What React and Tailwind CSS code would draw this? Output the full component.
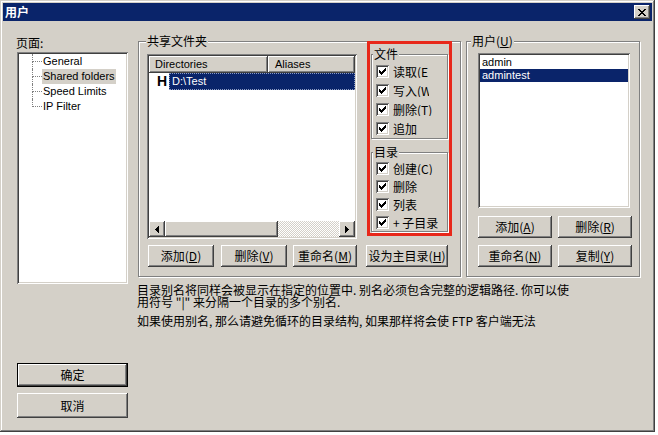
import React from "react";

const raised =
  "bg-[#d4d0c8] shadow-[inset_-1px_-1px_#404040,inset_1px_1px_#ffffff,inset_-2px_-2px_#808080,inset_2px_2px_#d4d0c8]";
const sunken =
  "bg-white shadow-[inset_1px_1px_#808080,inset_-1px_-1px_#ffffff,inset_2px_2px_#404040,inset_-2px_-2px_#d4d0c8]";
const cjk = "font-['Noto_Sans_CJK_SC','Noto_Sans_CJK_JP',sans-serif]";
const latin = "font-['Liberation_Sans','Noto_Sans_CJK_SC',sans-serif]";

function U({ c }) {
  return <span className="underline underline-offset-[1px]">{c}</span>;
}

function Btn({ children, className = "" }) {
  return (
    <div
      className={`${raised} ${cjk} flex items-center justify-center text-[12px] leading-none text-black ${className}`}
    >
      {children}
    </div>
  );
}

function Group({ label, labelPos, className = "", children }) {
  return (
    <div
      className={`relative border border-[#808080] shadow-[inset_1px_1px_#ffffff,1px_1px_#ffffff] ${className}`}
    >
      <span
        className={`absolute ${labelPos} top-[-7px] bg-[#d4d0c8] px-[1px] leading-[12px] h-[12px] whitespace-nowrap ${cjk} text-[12px]`}
      >
        {label}
      </span>
      {children}
    </div>
  );
}

function CheckMark() {
  const rects = [
    [6, 0, 1],
    [5, 1, 2],
    [0, 2, 1],
    [4, 2, 3],
    [0, 3, 2],
    [3, 3, 3],
    [0, 4, 5],
    [1, 5, 3],
    [2, 6, 1],
  ];
  return (
    <svg width="7" height="7" viewBox="0 0 7 7" shapeRendering="crispEdges">
      {rects.map(([x, y, w], i) => (
        <rect key={i} x={x} y={y} width={w} height="1" fill="#000" />
      ))}
    </svg>
  );
}

function Check({ children, h, w = "w-[52px]" }) {
  return (
    <div className={`flex items-center ${h}`}>
      <div className={`${sunken} w-[13px] h-[13px] flex items-center justify-center shrink-0`}>
        <CheckMark />
      </div>
      <span
        className={`ml-[4px] ${w} overflow-hidden whitespace-nowrap ${cjk} text-[12px] leading-[13px]`}
      >
        {children}
      </span>
    </div>
  );
}

function Arrow({ dir }) {
  return (
    <div className={`${raised} w-[16px] h-[16px] flex items-center justify-center shrink-0`}>
      <svg width="4" height="7" viewBox="0 0 4 7" shapeRendering="crispEdges">
        {dir === "left" ? (
          <path d="M4 0V7L0 3.5Z" fill="#000" />
        ) : (
          <path d="M0 0V7L4 3.5Z" fill="#000" />
        )}
      </svg>
    </div>
  );
}

function TreeRow({ text, sel, last }) {
  return (
    <div className="flex h-[15px] pl-[13px]">
      <div className="w-[10px] flex flex-col shrink-0">
        <div className="h-[8px] border-l border-b border-dotted border-[#808080]" />
        {!last && <div className="flex-1 border-l border-dotted border-[#808080]" />}
      </div>
      <span
        className={`px-[1px] leading-[15px] h-[15px] text-[11px] ${latin} ${
          sel ? "bg-[#d4d0c8]" : ""
        }`}
      >
        {text}
      </span>
    </div>
  );
}

export default function App() {
  return (
    <div className={`w-[658px] h-[435px] bg-white overflow-hidden ${latin} text-black`}>
      <div className="w-[655px] h-[432px] bg-[#d4d0c8] p-[3px] flex flex-col shadow-[inset_-1px_-1px_#404040,inset_1px_1px_#d4d0c8,inset_-2px_-2px_#808080,inset_2px_2px_#ffffff]">
        {/* Title bar */}
        <div className="h-[18px] bg-[#0a246a] flex items-center justify-between pl-[2px] pr-[2px] shrink-0">
          <span className={`${cjk} text-white font-bold text-[12px] leading-[14px]`}>用户</span>
          <div className={`${raised} w-[16px] h-[14px] flex items-center justify-center`}>
            <svg width="8" height="7" viewBox="0 0 8 7" shapeRendering="crispEdges">
              <path
                d="M0 0h2v1h1v1h2v-1h1v-1h2v1h-1v1h-1v1h-1v1h1v1h1v1h1v1h-2v-1h-1v-1h-2v1h-1v1h-2v-1h1v-1h1v-1h1v-1h-1v-1h-1v-1h-1z"
                fill="#000"
              />
            </svg>
          </div>
        </div>

        {/* Body */}
        <div className="flex">
          {/* Left column */}
          <div className="ml-[14px] w-[111px] pt-[15px] flex flex-col shrink-0">
            <div className={`${cjk} text-[12px] leading-[14px] h-[14px] -ml-[1px]`}>页面:</div>
            <div className={`${sunken} mt-[2px] h-[232px] p-[2px]`}>
              <TreeRow text="General" />
              <TreeRow text="Shared folders" sel />
              <TreeRow text="Speed Limits" />
              <TreeRow text="IP Filter" last />
            </div>
            <Btn className="mt-[79px] h-[24px] border border-black">确定</Btn>
            <Btn className="mt-[6px] h-[25px]">取消</Btn>
          </div>

          {/* Main column */}
          <div className="ml-[10px] pt-[20px] flex flex-col">
            <div className="flex">
              {/* Shared folders */}
              <Group
                label="共享文件夹"
                labelPos="left-[7px]"
                className="w-[323px] h-[236px] pt-[12px] pl-[8px] shrink-0"
              >
                <div className="flex items-start">
                  <div className={`${sunken} w-[210px] h-[185px] p-[2px] flex flex-col`}>
                    <div className="flex h-[17px] shrink-0 text-[11px]">
                      <div className={`${raised} w-[119px] pl-[6px] leading-[17px]`}>Directories</div>
                      <div className={`${raised} flex-1 pl-[7px] leading-[17px]`}>Aliases</div>
                    </div>
                    <div className="flex h-[17px] items-center shrink-0">
                      <div className="w-[20px] pl-[8px] font-bold text-[14px] leading-[17px] font-['Liberation_Sans',sans-serif]">
                        H
                      </div>
                      <div className="flex-1 h-[17px] bg-[#0a246a] text-white text-[11px] leading-[15px] pl-[2px] border border-dotted border-[#8d9cc4]">
                        D:\Test
                      </div>
                    </div>
                    <div className="flex-1" />
                    <div className="flex h-[16px] shrink-0">
                      <Arrow dir="left" />
                      <div className={`${raised} w-[113px]`} />
                      <div className="flex-1 bg-[repeating-conic-gradient(#ffffff_0_25%,#d4d0c8_0_50%)] bg-[length:2px_2px]" />
                      <Arrow dir="right" />
                    </div>
                  </div>

                  {/* Annotated permissions column */}
                  <div className="ml-[10px] -mt-[13px] w-[85px] h-[195px] border-[3px] border-[#e8281a] flex flex-col">
                    <Group
                      label="文件"
                      labelPos="left-[1px]"
                      className="mt-[10px] ml-[1px] w-[77px] pt-[7px] pl-[4px]"
                    >
                      <Check h="h-[19px]" w="w-[36px]">
                        读取(<U c="E" />
                      </Check>
                      <Check h="h-[19px]" w="w-[36px]">
                        写入(<U c="W" />
                      </Check>
                      <Check h="h-[19px]">
                        删除(<U c="T" />)
                      </Check>
                      <Check h="h-[19px]">追加</Check>
                    </Group>
                    <Group
                      label="目录"
                      labelPos="left-[1px]"
                      className="mt-[13px] ml-[1px] w-[77px] pt-[6px] pl-[4px]"
                    >
                      <Check h="h-[18px]">
                        创建(<U c="C" />)
                      </Check>
                      <Check h="h-[18px]">删除</Check>
                      <Check h="h-[18px]">列表</Check>
                      <Check h="h-[18px]">+ 子目录</Check>
                    </Group>
                  </div>
                </div>

                <div className="flex mt-[6px] ml-[1px]">
                  <Btn className="w-[66px] h-[22px]">
                    添加(<U c="D" />)
                  </Btn>
                  <Btn className="ml-[7px] w-[66px] h-[22px]">
                    删除(<U c="V" />)
                  </Btn>
                  <Btn className="ml-[6px] w-[64px] h-[22px]">
                    重命名(<U c="M" />)
                  </Btn>
                  <Btn className="ml-[9px] w-[82px] h-[22px]">
                    设为主目录(<U c="H" />)
                  </Btn>
                </div>
              </Group>

              {/* Users */}
              <Group
                label={
                  <>
                    用户(<U c="U" />)
                  </>
                }
                labelPos="left-[4px]"
                className="ml-[5px] w-[174px] h-[236px] pt-[11px] pl-[11px] shrink-0"
              >
                <div className={`${sunken} w-[152px] h-[155px] p-[2px] pt-[3px] text-[11px]`}>
                  <div className="h-[13px] leading-[13px] pl-[2px]">admin</div>
                  <div className="h-[13px] leading-[13px] pl-[2px] bg-[#0a246a] text-white">admintest</div>
                </div>
                <div className="flex mt-[8px]">
                  <Btn className="w-[74px] h-[22px]">
                    添加(<U c="A" />)
                  </Btn>
                  <Btn className="ml-[6px] w-[74px] h-[22px]">
                    删除(<U c="R" />)
                  </Btn>
                </div>
                <div className="flex mt-[7px]">
                  <Btn className="w-[74px] h-[22px]">
                    重命名(<U c="N" />)
                  </Btn>
                  <Btn className="ml-[6px] w-[74px] h-[22px]">
                    复制(<U c="Y" />)
                  </Btn>
                </div>
              </Group>
            </div>

            {/* Info text */}
            <div className={`mt-[7px] -ml-[1px] ${cjk} text-[12px] leading-[12px] whitespace-nowrap`}>
              <div>目录别名将同样会被显示在指定的位置中. 别名必须包含完整的逻辑路径. 你可以使</div>
              <div>用符号 "|" 来分隔一个目录的多个别名.</div>
              <div className="mt-[7px]">如果使用别名, 那么请避免循环的目录结构, 如果那样将会使 FTP 客户端无法</div>
            </div>
          </div>
        </div>
      </div>
    </div>
  );
}
